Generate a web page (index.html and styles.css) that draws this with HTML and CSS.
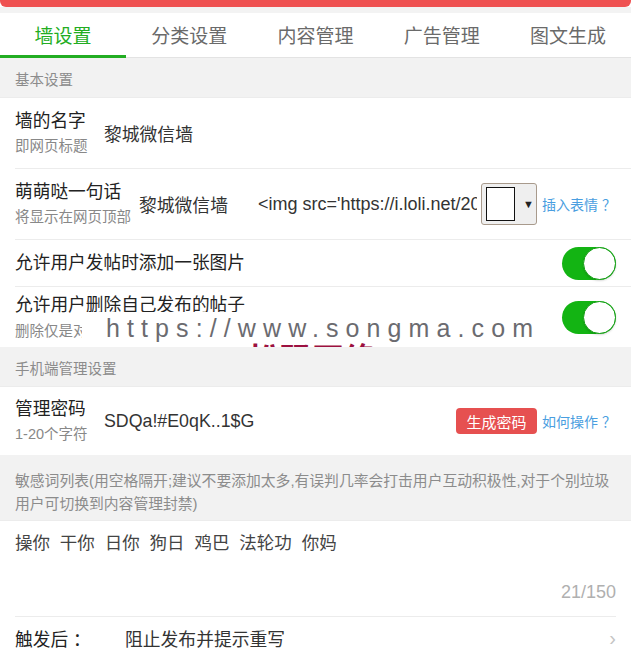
FILE: index.html
```html
<!DOCTYPE html>
<html lang="zh">
<head>
<meta charset="utf-8">
<title>墙设置</title>
<link rel="stylesheet" href="styles.css">
</head>
<body>
<div class="topbar"></div>
<div class="topgap"></div>
<nav class="tabs">
  <div class="tab active">墙设置</div>
  <div class="tab">分类设置</div>
  <div class="tab">内容管理</div>
  <div class="tab">广告管理</div>
  <div class="tab">图文生成</div>
</nav>

<div class="section-title">基本设置</div>
<div class="group">
  <div class="row row-tall">
    <div class="label">
      <div class="title">墙的名字</div>
      <div class="sub">即网页标题</div>
    </div>
    <div class="value">黎城微信墙</div>
  </div>
  <div class="row row-tall">
    <div class="label">
      <div class="title">萌萌哒一句话</div>
      <div class="sub">将显示在网页顶部</div>
    </div>
    <div class="value value-gap">黎城微信墙</div>
    <div class="input-text">&lt;img src='https://i.loli.net/2019/01/12/face.gif'&gt;</div>
    <div class="select"><span class="select-box"></span><span class="select-arrow">▼</span></div>
    <a class="link">插入表情<span class="q">？</span></a>
  </div>
  <div class="row row-switch">
    <div class="title flex1">允许用户发帖时添加一张图片</div>
    <div class="switch"><span class="knob"></span></div>
  </div>
  <div class="row row-switch2">
    <div class="label flex1">
      <div class="title">允许用户删除自己发布的帖子</div>
      <div class="sub">删除仅是对用户自己隐藏，管理员仍可见</div>
    </div>
    <div class="switch"><span class="knob"></span></div>
  </div>
</div>

<div class="section-title">手机端管理设置</div>
<div class="group">
  <div class="row row-pass">
    <div class="label">
      <div class="title">管理密码</div>
      <div class="sub">1-20个字符</div>
    </div>
    <div class="value flex1">SDQa!#E0qK..1$G</div>
    <button class="btn-red">生成密码</button>
    <a class="link">如何操作<span class="q">？</span></a>
  </div>
</div>

<div class="section-title section-multi">敏感词列表(用空格隔开;建议不要添加太多,有误判几率会打击用户互动积极性,对于个别垃圾用户可切换到内容管理封禁)</div>
<div class="group">
  <div class="textarea">
    <div class="ta-text">操你 干你 日你 狗日 鸡巴 法轮功 你妈</div>
    <div class="ta-count">21/150</div>
  </div>
  <div class="row row-select">
    <div class="trigger-label">触发后<span class="colon">：</span></div>
    <div class="value flex1">阻止发布并提示重写</div>
    <span class="chevron">›</span>
  </div>
</div>

<div class="watermark">
  <div class="wm-url">https://www.songma.com</div>
  <div class="wm-red">松码网络</div>
</div>
</body>
</html>
```

FILE: styles.css
```css
html, body {
  margin: 0;
  padding: 0;
  overflow: hidden;
  background: #ffffff;
}
body {
  font-family: "Liberation Sans", "Noto Sans CJK SC", sans-serif;
  color: #222;
  width: 631px;
  position: relative;
}
.topbar {
  height: 7px;
  background: #ef5151;
  border-radius: 0 0 6px 6px;
}
.topgap {
  height: 6px;
  background: #f3f3f3;
}
.tabs {
  display: flex;
  height: 44px;
  border-bottom: 1px solid #e3e3e3;
  background: #fff;
}
.tab {
  flex: 1;
  display: flex;
  align-items: center;
  justify-content: center;
  font-size: 19px;
  color: #6a6a6a;
  position: relative;
  padding-bottom: 1px;
}
.tab.active {
  color: #22ad22;
}
.tab.active::after {
  content: "";
  position: absolute;
  left: 0;
  right: 0;
  bottom: -1px;
  height: 3px;
  background: #22ad22;
}
.section-title {
  background: #f2f2f2;
  color: #8c8c8c;
  font-size: 14.5px;
  height: 36px;
  line-height: 39px;
  padding: 3px 15px 0;
  border-bottom: 1px solid #ececec;
}
.section-multi {
  height: auto;
  font-size: 14.8px;
  line-height: 23px;
  padding: 15px 15px 4px;
}
.group {
  background: #fff;
}
.row {
  display: flex;
  align-items: center;
  margin-left: 15px;
  padding-right: 15px;
  border-bottom: 1px solid #ececec;
}
.row:last-child {
  border-bottom: none;
}
.row-tall { height: 70px; }
.row-switch { height: 46px; }
.row-switch2 { height: 60px; }
.row-pass { height: 68px; }
.row-select { height: 42px; }
.label {
  min-width: 81px;
  margin-right: 8px;
}
.title {
  font-size: 17.7px;
  line-height: 24px;
  color: #222;
}
.sub {
  font-size: 14.5px;
  line-height: 22px;
  color: #888;
  margin-top: 2px;
}
.value {
  font-size: 17.8px;
  color: #333;
  white-space: nowrap;
}
.value-gap {
  margin-right: 30px;
}
.flex1 { flex: 1; min-width: 0; }
.input-text {
  flex: 1;
  min-width: 0;
  overflow: hidden;
  white-space: nowrap;
  font-size: 18px;
  color: #333;
  margin-right: 4px;
}
.select {
  width: 54px;
  height: 40px;
  border: 1px solid #a89a8c;
  border-radius: 3px;
  background: #efefef;
  display: flex;
  align-items: center;
  box-sizing: content-box;
}
.select-box {
  width: 27px;
  height: 32px;
  border: 1px solid #111;
  background: #fff;
  margin-left: 4px;
}
.select-arrow {
  font-size: 11px;
  color: #222;
  margin-left: 8px;
}
.link {
  color: #4a9ee0;
  font-size: 14px;
  margin-left: 5px;
  white-space: nowrap;
}
.q {
  padding-left: 4px;
}
.colon {
  padding-left: 5px;
}
.switch {
  width: 54px;
  height: 33px;
  border-radius: 17px;
  background: #13b413;
  position: relative;
  flex: none;
}
.knob {
  position: absolute;
  right: 0;
  top: 0;
  width: 31px;
  height: 31px;
  border-radius: 50%;
  background: #fff;
  border: 1px solid #0f9e0f;
  box-shadow: 0 1px 2px rgba(0,0,0,0.15);
}
.row-switch2 .sub {
  margin-top: 3px;
}
.btn-red {
  background: #e65050;
  color: #fff;
  border: none;
  border-radius: 4px;
  font-family: inherit;
  font-size: 15px;
  height: 26px;
  width: 81px;
  padding: 0;
}
.textarea {
  margin: 0 15px;
  border-bottom: 1px solid #ececec;
  height: 95px;
  position: relative;
}
.ta-text {
  font-size: 17.5px;
  color: #444;
  padding-top: 9px;
  line-height: 26px;
  word-spacing: 5px;
}
.ta-count {
  position: absolute;
  right: 0;
  bottom: 13px;
  color: #b0b0b0;
  font-size: 18px;
}
.trigger-label {
  font-size: 17.7px;
  width: 110px;
  color: #222;
}
.chevron {
  color: #c4c4c4;
  font-size: 20px;
}
.watermark {
  position: absolute;
  left: 82px;
  top: 312px;
  width: 466px;
  height: 35px;
  background: #fff;
  overflow: hidden;
}
.wm-url {
  position: absolute;
  left: 24px;
  top: 1px;
  font-size: 25px;
  letter-spacing: 7.1px;
  color: #6b6b70;
  line-height: 30px;
  white-space: nowrap;
}
.wm-red {
  position: absolute;
  left: 166px;
  top: 28px;
  font-size: 32px;
  line-height: 40px;
  font-weight: bold;
  color: #9c1040;
  white-space: nowrap;
}
```
